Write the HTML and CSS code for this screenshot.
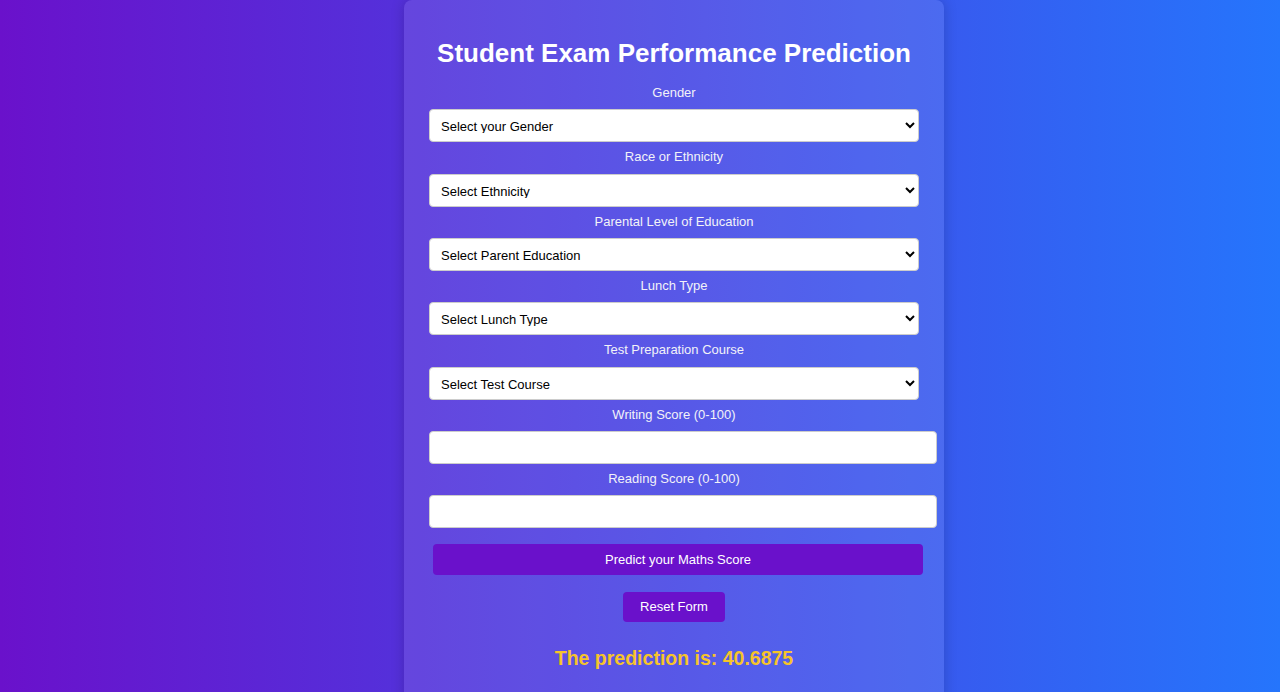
FILE: index.html
```html
<!DOCTYPE html>
<html lang="en">
<head>
<meta charset="utf-8">
<title>Student Exam Performance Prediction</title>
<link rel="stylesheet" href="styles.css">
</head>
<body>
<div class="card">
  <h1 class="title">Student Exam Performance Prediction</h1>
  <form class="form">
    <label class="label">Gender</label>
    <select class="field select"><option>Select your Gender</option></select>
    <label class="label">Race or Ethnicity</label>
    <select class="field select"><option>Select Ethnicity</option></select>
    <label class="label">Parental Level of Education</label>
    <select class="field select"><option>Select Parent Education</option></select>
    <label class="label">Lunch Type</label>
    <select class="field select"><option>Select Lunch Type</option></select>
    <label class="label">Test Preparation Course</label>
    <select class="field select"><option>Select Test Course</option></select>
    <label class="label">Writing Score (0-100)</label>
    <input class="field input" type="number">
    <label class="label">Reading Score (0-100)</label>
    <input class="field input" type="number">
    <button type="button" class="btn btn-predict">Predict your Maths Score</button>
    <div class="reset-row"><button type="button" class="btn btn-reset">Reset Form</button></div>
  </form>
  <h2 class="result">The prediction is: 40.6875</h2>
</div>
</body>
</html>
```
FILE: styles.css
```css
html, body {
  margin: 0;
  padding: 0;
}
body {
  min-height: 692px;
  padding-left: 68px;
  background: linear-gradient(to right, #6a11cb, #2575fc);
  font-family: "Liberation Sans", Arial, sans-serif;
  font-size: 13px;
  color: #fff;
}
.card {
  width: 490px;
  margin: 0 auto;
  padding: 25px 25px 40px;
  background: rgba(255, 255, 255, 0.1);
  border-radius: 8px;
  box-shadow: 0 0 14px rgba(0, 0, 0, 0.18);
}
.title {
  margin: 13px 0 17px;
  font-size: 26px;
  line-height: 30px;
  font-weight: bold;
  text-align: center;
  color: #fff;
}
.form {
  display: flex;
  flex-direction: column;
}
.label {
  display: block;
  text-align: center;
  font-size: 13px;
  line-height: 16.33px;
  margin-bottom: 8px;
  color: #f2f2f8;
}
.field {
  font-family: "Liberation Sans", Arial, sans-serif;
  font-size: 13px;
  line-height: 15px;
  padding: 8px 8px 8px 7px;
  border: 1px solid #ccc;
  border-radius: 4px;
  background: #fff;
  color: #000;
  margin: 0 0 7px;
}
.select {
  width: 490px;
  box-sizing: border-box;
  height: 33px;
}
.input {
  width: 491px;
  box-sizing: content-box;
  height: 15px;
}
.btn {
  font-family: "Liberation Sans", Arial, sans-serif;
  font-size: 13px;
  color: #fff;
  background: #6a11cb;
  border: none;
  border-radius: 4px;
  cursor: pointer;
}
.btn-predict {
  width: 490px;
  margin: 9px 0 0 4px;
  height: 31px;
  padding: 0 16px;
  line-height: 31px;
}
.reset-row {
  display: flex;
  justify-content: center;
  margin-top: 17px;
}
.btn-reset {
  height: 30px;
  padding: 0 17px;
  line-height: 30px;
}
.result {
  margin: 25px 0 0;
  font-size: 19.5px;
  line-height: 22px;
  font-weight: bold;
  text-align: center;
  color: #f6c42a;
}
```
